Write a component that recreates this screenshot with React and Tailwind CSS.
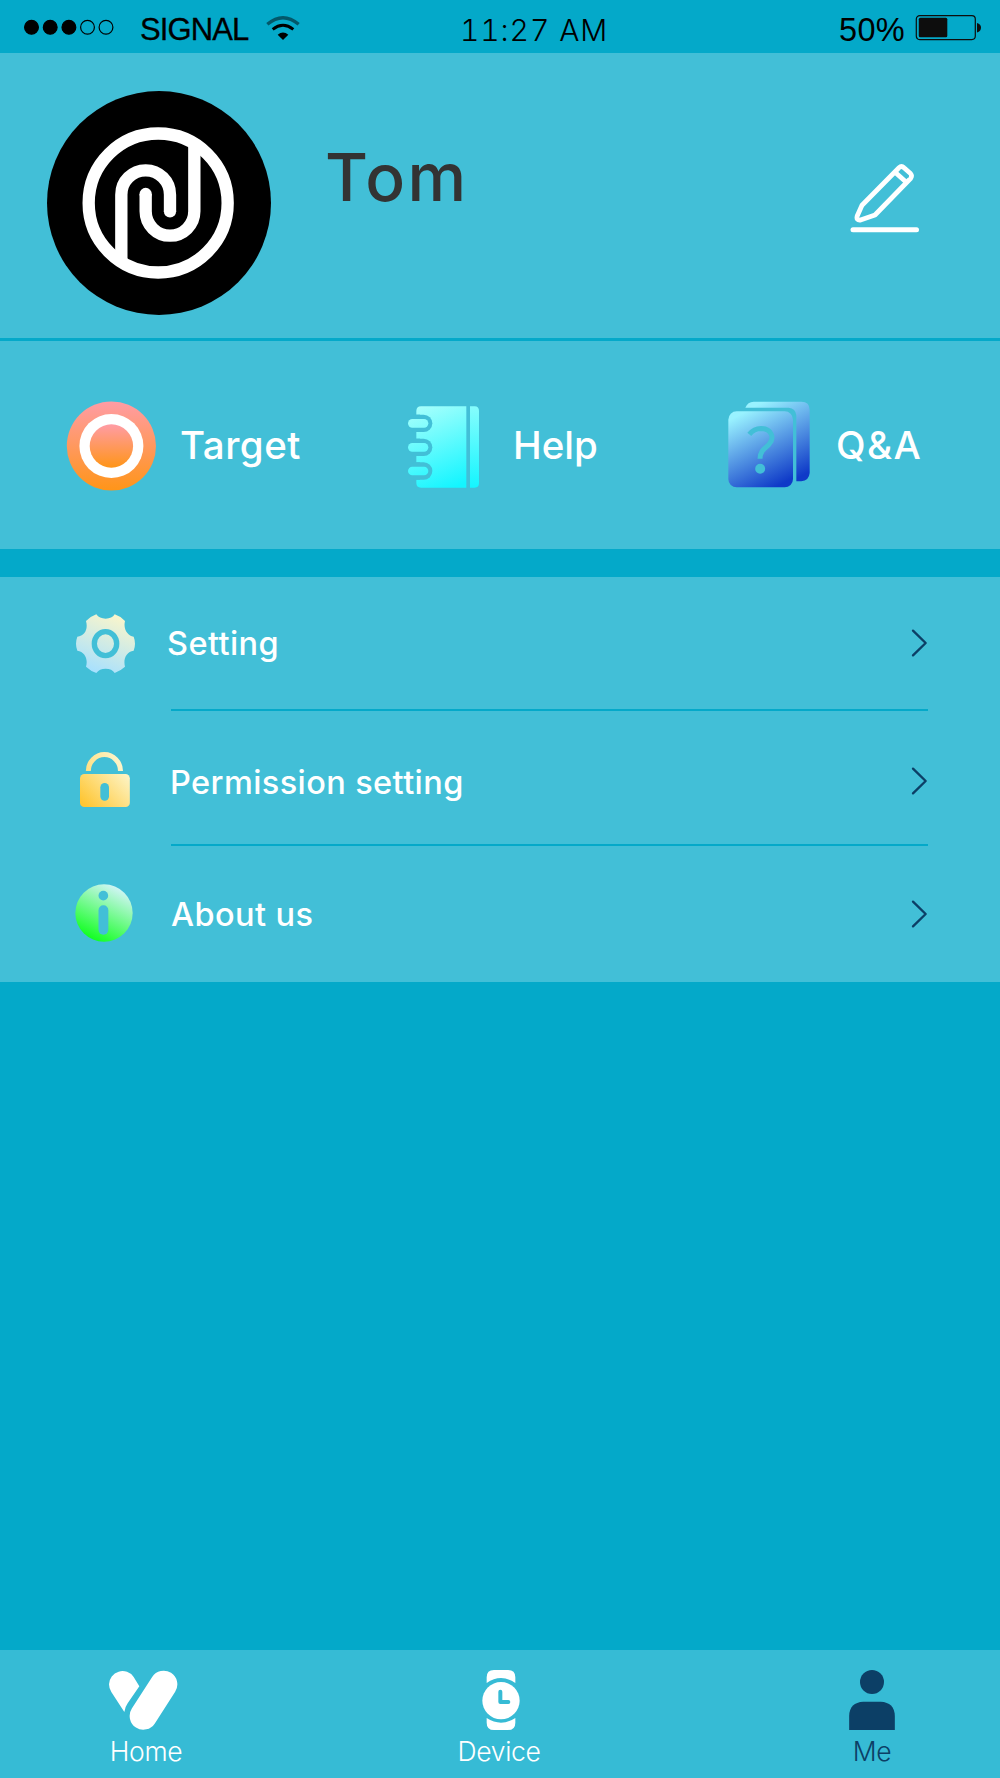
const Chevron = () => (
    <svg className="h-7 w-[17px]" viewBox="184 87 51 84" fill="none">
        <path d="M190 92 L228 129 L190 166" stroke="#0c3f66" strokeWidth="7" strokeLinecap="round" strokeLinejoin="round" />
    </svg>
);

const StatusBar = () => (
    <header className="flex h-[53px] items-start bg-[#04a9c9] text-black">
        <svg className="ml-6 mt-[19px] h-4 w-[90px]" viewBox="0 0 90 16" stroke="#000" strokeWidth="1.2">
            {[7.5, 26.2, 44.9, 63.5, 82].map((cx, i) => (
                <circle key={cx} cx={cx} cy="8.3" r="6.9" fill={i < 3 ? '#000' : 'none'} />
            ))}
        </svg>
        <span className="ml-[26px] mt-3.5 w-[109px] text-[31px] leading-8 tracking-[-0.9px] [-webkit-text-stroke:0.3px_#000]">SIGNAL</span>
        <svg className="ml-[17px] mt-[15px] h-[26px] w-[34px]" viewBox="797 45 102 78" fill="none">
            <path d="M801 73 Q848 33 895 73" stroke="#03586a" strokeWidth="10" />
            <path d="M817 88 Q848 64 879 88" stroke="#000" strokeWidth="9" />
            <path d="M832 104 Q848 91 864 104 L848 120Z" fill="#000" />
        </svg>
        <span className="ml-[160px] mt-[14px] font-['Inter'] text-[30px] font-light tabular-nums leading-8 tracking-[0.9px]">11:27 AM</span>
        <div className="ml-auto mr-[18px] flex">
            <span className="mt-[14px] text-[32.5px] leading-8 tracking-[0.3px]">50%</span>
            <svg className="ml-[10px] mt-[14px] h-7 w-[67px]" viewBox="0 0 67 28">
                <rect x="1.3" y="1.6" width="59" height="24" rx="3.5" fill="none" stroke="#0d0d0d" strokeWidth="1.2" />
                <rect x="3.8" y="3.7" width="28.5" height="19.5" rx="1.5" fill="#0d0d0d" />
                <path d="M62 9 Q66 10 66 13.6 Q66 17.5 62 18.4Z" fill="#0d0d0d" />
            </svg>
        </div>
    </header>
);

const Avatar = () => (
    <svg className="h-[224px] w-[224px] shrink-0" viewBox="51 33 672 672" fill="none" stroke="#fff" strokeWidth="37">
        <circle cx="387" cy="369" r="336" fill="#000" stroke="none" />
        <circle cx="384.5" cy="369" r="208.5" />
        <path d="M274 550 V344 A73 73 0 0 1 420 344 V394" />
        <path d="M347 342 V394 A73 73 0 0 0 493 394 V190" />
        <circle cx="420" cy="394" r="18.5" fill="#fff" stroke="none" />
        <circle cx="347" cy="342" r="18.5" fill="#fff" stroke="none" />
    </svg>
);

const PencilIcon = () => (
    <svg className="h-[72px] w-[70px]" viewBox="0 0 70 72" fill="none" stroke="#fff" strokeWidth="4.8" strokeLinejoin="round" strokeLinecap="round">
        <path d="M49 4.7 Q51.5 2.2 54 4.7 L60.5 10.5 Q62.5 12.7 60.5 15.5 L25 52 L10.5 57 Q6 57.5 7.2 53 L12 42.3Z" />
        <path d="M46.5 10.5 L56 19" />
        <path d="M51 7.7 L57.7 13.7" stroke="#42bfd7" strokeWidth="2.2" />
        <path d="M3 66.7 H66.5" strokeWidth="5" />
    </svg>
);

const TargetIcon = () => (
    <svg className="h-[90px] w-[90px]" viewBox="0 0 90 90">
        <defs>
            <linearGradient id="target" x1="0" y1="0" x2="0" y2="1">
                <stop offset="0" stopColor="#ff9ca5" />
                <stop offset="1" stopColor="#ff9518" />
            </linearGradient>
        </defs>
        <circle cx="45.4" cy="45" r="44.6" fill="url(#target)" />
        <circle cx="45.4" cy="45" r="32" fill="#fff" />
        <circle cx="45.4" cy="45" r="21.7" fill="url(#target)" />
    </svg>
);

const HelpIcon = () => (
    <svg className="h-[82px] w-[71px]" viewBox="54 79 213 246">
        <defs>
            <linearGradient id="help" gradientUnits="userSpaceOnUse" x1="90" y1="80" x2="190" y2="324">
                <stop offset="0" stopColor="#a6fffc" />
                <stop offset="1" stopColor="#14f5ff" />
            </linearGradient>
            <linearGradient id="helpStrip" x1="0" y1="0" x2="0" y2="1">
                <stop offset="0" stopColor="#86fdfd" />
                <stop offset="1" stopColor="#14f5ff" />
            </linearGradient>
        </defs>
        <path d="M229 80 V324 H93 Q79 324 79 310 V94 Q79 80 93 80Z" fill="url(#help)" />
        <path d="M240 80 H254 Q267 80 267 94 V310 Q267 324 254 324 H240Z" fill="url(#helpStrip)" />
        {/* spiral rings */}
        {[131, 203, 274].map((y) => (
            <g key={y}>
                <rect x="54" y={y - 26} width="73" height="52" rx="26" fill="#42bfd7" />
                <rect x="70" y={y - 26} width="20" height="52" fill="#42bfd7" />
                <rect x="54" y={y - 13} width="61" height="26" rx="13" fill="url(#help)" />
            </g>
        ))}
    </svg>
);

const QaIcon = () => (
    <svg className="h-[87px] w-[82px]" viewBox="53 62 246 261">
        <defs>
            <linearGradient id="qa" x1="0.28" y1="0" x2="0.72" y2="1">
                <stop offset="0" stopColor="#99f2ff" />
                <stop offset="1" stopColor="#0f3ac8" />
            </linearGradient>
        </defs>
        <path d="M105 82 Q112 64 130 64 H273 Q298 64 298 89 V278 Q296 301 273 303 H258 V105 Q256 84 235 82Z" fill="url(#qa)" />
        <rect x="54" y="93" width="194" height="228" rx="25" fill="url(#qa)" />
        <path d="M117 162 Q131 145 152 144.5 C183 145 194 172 176 192 C166 203 149 210 149 235" fill="none" stroke="#42bfd7" strokeWidth="15" />
        <circle cx="149.5" cy="265" r="15" fill="#42bfd7" />
    </svg>
);

const GearIcon = () => (
    <svg className="h-[59px] w-[59px]" viewBox="48 70 177 177">
        <defs>
            <linearGradient id="gear" x1="0.3" y1="1" x2="0.7" y2="0">
                <stop offset="0" stopColor="#a6e0ff" />
                <stop offset="1" stopColor="#fbf6cb" />
            </linearGradient>
        </defs>
        <path
            fill="url(#gear)"
            d="M109 71 Q118 84 137 84 Q156 84 164 71 Q182 77 195 91 C189 115 203 136 221 138 Q229 159 221 180 C199 183 189 205 195 228 Q182 240 164 247 Q156 234 137 234 Q118 234 109 247 Q92 241 78 228 C85 205 74 183 52 180 Q44 159 52 138 C74 136 85 115 78 91 Q92 77 109 71Z"
        />
        <ellipse cx="136.5" cy="159" rx="33.5" ry="36" fill="none" stroke="#42bfd7" strokeWidth="16" />
    </svg>
);

const LockIcon = () => (
    <svg className="h-[55px] w-[50px]" viewBox="60 66 150 165">
        <defs>
            <linearGradient id="lock" gradientUnits="userSpaceOnUse" x1="80" y1="231" x2="190" y2="125">
                <stop offset="0" stopColor="#ffc633" />
                <stop offset="1" stopColor="#fdf3c2" />
            </linearGradient>
            <linearGradient id="shackle" gradientUnits="userSpaceOnUse" x1="80" y1="123" x2="180" y2="80">
                <stop offset="0" stopColor="#ffe083" />
                <stop offset="1" stopColor="#fdf5cc" />
            </linearGradient>
        </defs>
        <path d="M85 123 A48 49 0 0 1 181.5 123" fill="none" stroke="url(#shackle)" strokeWidth="15" />
        <rect x="60" y="132" width="149.5" height="99" rx="13" fill="url(#lock)" />
        <rect x="121" y="159" width="26" height="53" rx="13" fill="#42bfd7" />
    </svg>
);

const InfoIcon = () => (
    <svg className="h-[58px] w-[58px]" viewBox="44 461 174 174">
        <defs>
            <linearGradient id="info" x1="0.3" y1="0.95" x2="0.75" y2="0.05">
                <stop offset="0" stopColor="#14ff24" />
                <stop offset="1" stopColor="#d2f5f7" />
            </linearGradient>
        </defs>
        <circle cx="131" cy="548" r="86" fill="url(#info)" />
        <circle cx="129" cy="496" r="14.5" fill="#42bfd7" />
        <rect x="114.5" y="525" width="29.5" height="88" rx="14.5" fill="#42bfd7" />
    </svg>
);

const HomeIcon = () => (
    <svg className="h-[60px] w-[69px]" viewBox="88 91 207 180" fill="#fff">
        <path d="M95 157 L134 217 Q136 202 144 191 L179 140 L162 112 A40.5 40.5 0 0 0 88 134 Q88 146 95 157Z" />
        <path d="M252 134 L191 229" stroke="#fff" strokeWidth="82" strokeLinecap="round" />
    </svg>
);

const WatchIcon = () => (
    <svg className="h-[60px] w-[38px]" viewBox="1207 90 114 180" fill="#fff">
        <path d="M1221 129 V112 Q1221 90 1243 90 H1285 Q1307 90 1307 112 V129 Q1264 99 1221 129Z" />
        <path d="M1221 234 V248 Q1221 270 1243 270 H1285 Q1307 270 1307 248 V234 Q1264 262 1221 234Z" />
        <circle cx="1264" cy="182" r="56" />
        <path d="M1262 155 V186 H1286" fill="none" stroke="#36bbd5" strokeWidth="12" strokeLinecap="round" strokeLinejoin="round" />
    </svg>
);

const PersonIcon = () => (
    <svg className="h-[60px] w-[46px]" viewBox="147 90 138 180" fill="#0c3f66">
        <circle cx="216" cy="126" r="36" />
        <path d="M147.5 270 V227 Q149 187 190 185 H242 Q283 187 284.5 227 V270Z" />
    </svg>
);

const menu = [
    { label: 'Setting', icon: <GearIcon />, row: 'h-[132px]', iconBox: 'ml-[76px] w-[59px]', text: 'ml-8 pt-0.5', arrow: '' },
    { label: 'Permission setting', icon: <LockIcon />, row: 'h-[133px] pt-1', iconBox: 'ml-[80px] w-[50px]', text: 'ml-10 pt-[7px]', arrow: 'pt-[3px]' },
    { label: 'About us', icon: <InfoIcon />, row: 'h-[136px]', iconBox: 'ml-[75px] w-[58px] pb-0.5', text: 'ml-[38px] pt-0.5', arrow: 'pb-px' },
];

export default function App() {
    return (
        <div className="flex h-[1778px] w-[1000px] flex-col overflow-hidden bg-[#04a9c9] font-['Liberation_Sans',sans-serif] text-white">
            <StatusBar />

            <section className="flex h-[285px] items-start bg-[#42bfd7]">
                <div className="ml-[47px] mt-[38px]"><Avatar /></div>
                <h1 className="ml-[54px] mt-[84px] font-['Inter'] text-[66px] font-[450] leading-[80px] tracking-[2.4px] text-[#333]">Tom</h1>
                <button className="ml-auto mr-20 mt-[110px]"><PencilIcon /></button>
            </section>

            <section className="mt-[3px] flex h-[208px] items-start bg-[#42bfd7] font-['Inter'] text-[38.5px] font-[450] leading-[48px]">
                <div className="ml-[66px] mt-[60px] flex w-[342px] items-center gap-6">
                    <TargetIcon />
                    <span className="-mt-0.5 tracking-[0.5px]">Target</span>
                </div>
                <div className="mt-[65px] flex w-[320px] items-center gap-[34px]">
                    <HelpIcon />
                    <span className="-mt-1">Help</span>
                </div>
                <div className="mt-[60px] flex items-center gap-[26px]">
                    <QaIcon />
                    <span className="tracking-[1.4px]">Q&amp;A</span>
                </div>
            </section>

            <section className="mt-7 bg-[#42bfd7]">
                {menu.map((item, i) => (
                    <div key={item.label}>
                        {i > 0 && <div className="ml-[171px] h-0.5 w-[757px] bg-[#04a9c9]" />}
                        <div className={`flex items-center ${item.row}`}>
                            <div className={item.iconBox}>{item.icon}</div>
                            <span className={`font-['Inter'] text-[32.5px] font-[450] leading-10 tracking-[0.4px] ${item.text}`}>{item.label}</span>
                            <div className={`ml-auto mr-[72px] ${item.arrow}`}><Chevron /></div>
                        </div>
                    </div>
                ))}
            </section>

            <nav className="mt-auto flex h-[128px] shrink-0 bg-[#36bbd5] pt-5 font-['Inter'] text-[26.5px] font-light leading-8 tracking-[-0.3px]">
                <div className="ml-[83px] flex w-[120px] flex-col items-center">
                    <HomeIcon />
                    <span className="ml-1.5 mt-[5px]">Home</span>
                </div>
                <div className="ml-[238px] flex w-[120px] flex-col items-center">
                    <WatchIcon />
                    <span className="mr-1 mt-[5px]">Device</span>
                </div>
                <div className="ml-[251px] flex w-[120px] flex-col items-center text-[#0c3f66]">
                    <PersonIcon />
                    <span className="mt-[5px]">Me</span>
                </div>
            </nav>
        </div>
    );
}
